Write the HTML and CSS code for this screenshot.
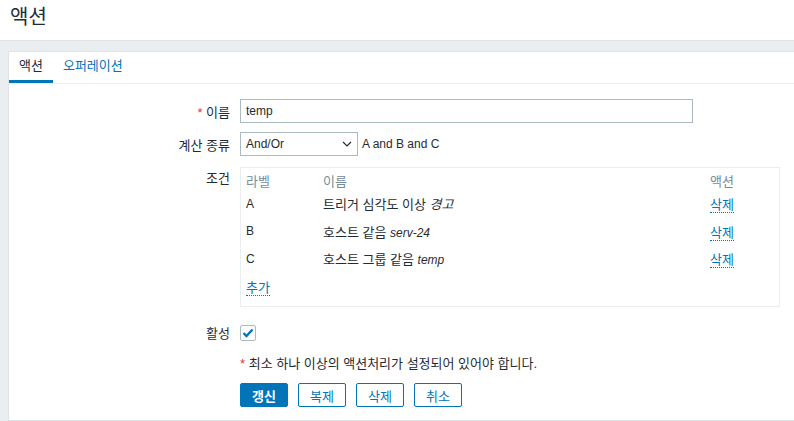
FILE: index.html
```html
<!DOCTYPE html>
<html lang="ko">
<head>
  <meta charset="UTF-8">
  <title>액션</title>
  <link rel="stylesheet" href="styles.css">
</head>
<body>
  <header class="page-header">
    <h1 class="page-title">액션</h1>
  </header>

  <main class="wrapper">
    <div class="card">
      <ul class="tabs">
        <li class="tab active">액션</li>
        <li class="tab">오퍼레이션</li>
      </ul>

      <div class="form">
        <div class="form-row">
          <label class="form-label"><span class="req">*</span> 이름</label>
          <div class="form-field">
            <input type="text" class="text-input" value="temp">
          </div>
        </div>

        <div class="form-row">
          <label class="form-label">계산 종류</label>
          <div class="form-field inline">
            <div class="select">
              <span>And/Or</span>
              <svg width="10" height="6" viewBox="0 0 10 6"><path d="M1 1l4 4 4-4" fill="none" stroke="#1f2c33" stroke-width="1.2"/></svg>
            </div>
            <span class="formula">A and B and C</span>
          </div>
        </div>

        <div class="form-row">
          <label class="form-label label-top">조건</label>
          <div class="form-field">
            <div class="conditions">
              <table class="cond-table">
                <thead>
                  <tr><th class="col-label">라벨</th><th>이름</th><th class="col-action">액션</th></tr>
                </thead>
                <tbody>
                  <tr><td class="cell-label">A</td><td>트리거 심각도 이상 <em>경고</em></td><td><a class="link">삭제</a></td></tr>
                  <tr><td class="cell-label">B</td><td>호스트 같음 <em class="latin">serv-24</em></td><td><a class="link">삭제</a></td></tr>
                  <tr><td class="cell-label">C</td><td>호스트 그룹 같음 <em class="latin">temp</em></td><td><a class="link">삭제</a></td></tr>
                  <tr><td colspan="3"><a class="link">추가</a></td></tr>
                </tbody>
              </table>
            </div>
          </div>
        </div>

        <div class="form-row row-check">
          <label class="form-label">활성</label>
          <div class="form-field">
            <span class="checkbox">
              <svg width="12" height="10" viewBox="0 0 12 10"><path d="M1.5 5l3 3 6-6.5" fill="none" stroke="#0275b8" stroke-width="2.4"/></svg>
            </span>
          </div>
        </div>

        <p class="note"><span class="req">*</span> 최소 하나 이상의 액션처리가 설정되어 있어야 합니다.</p>

        <div class="buttons">
          <button class="btn btn-primary">갱신</button>
          <button class="btn">복제</button>
          <button class="btn">삭제</button>
          <button class="btn">취소</button>
        </div>
      </div>
    </div>
  </main>
</body>
</html>
```

FILE: styles.css
```css
* {
  margin: 0;
  padding: 0;
  box-sizing: border-box;
}

/* hangul runs a bit wider than latin, so base size is 13px and latin bits drop to 12px */
body {
  font-family: "Liberation Sans", Arial, "Noto Sans CJK KR", sans-serif;
  font-size: 13px;
  color: #1f2c33;
  background: #ebeef0;
  overflow: hidden;
  height: 421px;
}

.page-header {
  height: 41px;
  background: #ffffff;
  border-bottom: 1px solid #dfe4e7;
  padding: 4px 10px;
}

.page-title {
  font-size: 20px;
  font-weight: normal;
  line-height: 26px;
}

.wrapper {
  padding: 10px 0 0 8px;
}

.card {
  background: #ffffff;
  border: 1px solid #dfe4e7;
  border-right: none;
  height: 370px;
}

.tabs {
  list-style: none;
  display: flex;
  border-bottom: 1px solid #ebeef0;
  height: 32px;
}

.tab {
  padding: 0 10px;
  line-height: 28px;
  color: #0275b8;
  border-bottom: 3px solid transparent;
}

.tab.active {
  color: #1f2c33;
  border-bottom-color: #0275b8;
}

.form {
  padding-top: 15px;
}

.form-row {
  display: flex;
  align-items: center;
  margin-bottom: 9px;
}

.form-label {
  width: 221px;
  margin-right: 10px;
  text-align: right;
}

.label-top {
  align-self: flex-start;
  padding-top: 3px;
}

.req {
  color: #e33734;
}

.form-field.inline {
  display: flex;
  align-items: center;
}

.text-input {
  width: 453px;
  height: 24px;
  border: 1px solid #acbbc2;
  padding: 0 5px;
  font: inherit;
  font-size: 12px;
  color: #1f2c33;
  outline: none;
}

.select {
  width: 118px;
  height: 24px;
  border: 1px solid #acbbc2;
  padding: 0 5px;
  display: flex;
  align-items: center;
  justify-content: space-between;
  font-size: 12px;
}

.formula {
  margin-left: 4px;
  font-size: 12px;
}

.conditions {
  width: 540px;
  height: 140px;
  border: 1px solid #ebeef0;
  padding: 3px 5px;
  margin-top: 2px;
}

.cond-table {
  width: 100%;
  border-collapse: collapse;
}

.cond-table th {
  text-align: left;
  font-weight: normal;
  color: #768d99;
  height: 18px;
}

.cond-table td {
  height: 27.5px;
}

.cond-table em {
  font-style: italic;
}

.cond-table em.latin,
.cell-label {
  font-size: 12px;
}

.col-label {
  width: 77px;
}

.col-action {
  width: 64px;
}

.link {
  color: #0275b8;
  text-decoration: none;
  border-bottom: 1px dotted #0275b8;
  cursor: pointer;
}

.row-check {
  margin-top: 16px;
  margin-bottom: 14px;
}

.checkbox {
  display: flex;
  align-items: center;
  justify-content: center;
  width: 16px;
  height: 16px;
  border: 1px solid #acbbc2;
  border-radius: 2px;
}

.note {
  margin-left: 231px;
  line-height: 16px;
}

.buttons {
  display: flex;
  gap: 10px;
  margin: 11px 0 0 231px;
}

.btn {
  width: 48px;
  height: 24px;
  border: 1px solid #0275b8;
  border-radius: 2px;
  background: #ffffff;
  color: #0275b8;
  font: inherit;
}

.btn-primary {
  background: #0275b8;
  color: #ffffff;
  font-weight: bold;
}
```
